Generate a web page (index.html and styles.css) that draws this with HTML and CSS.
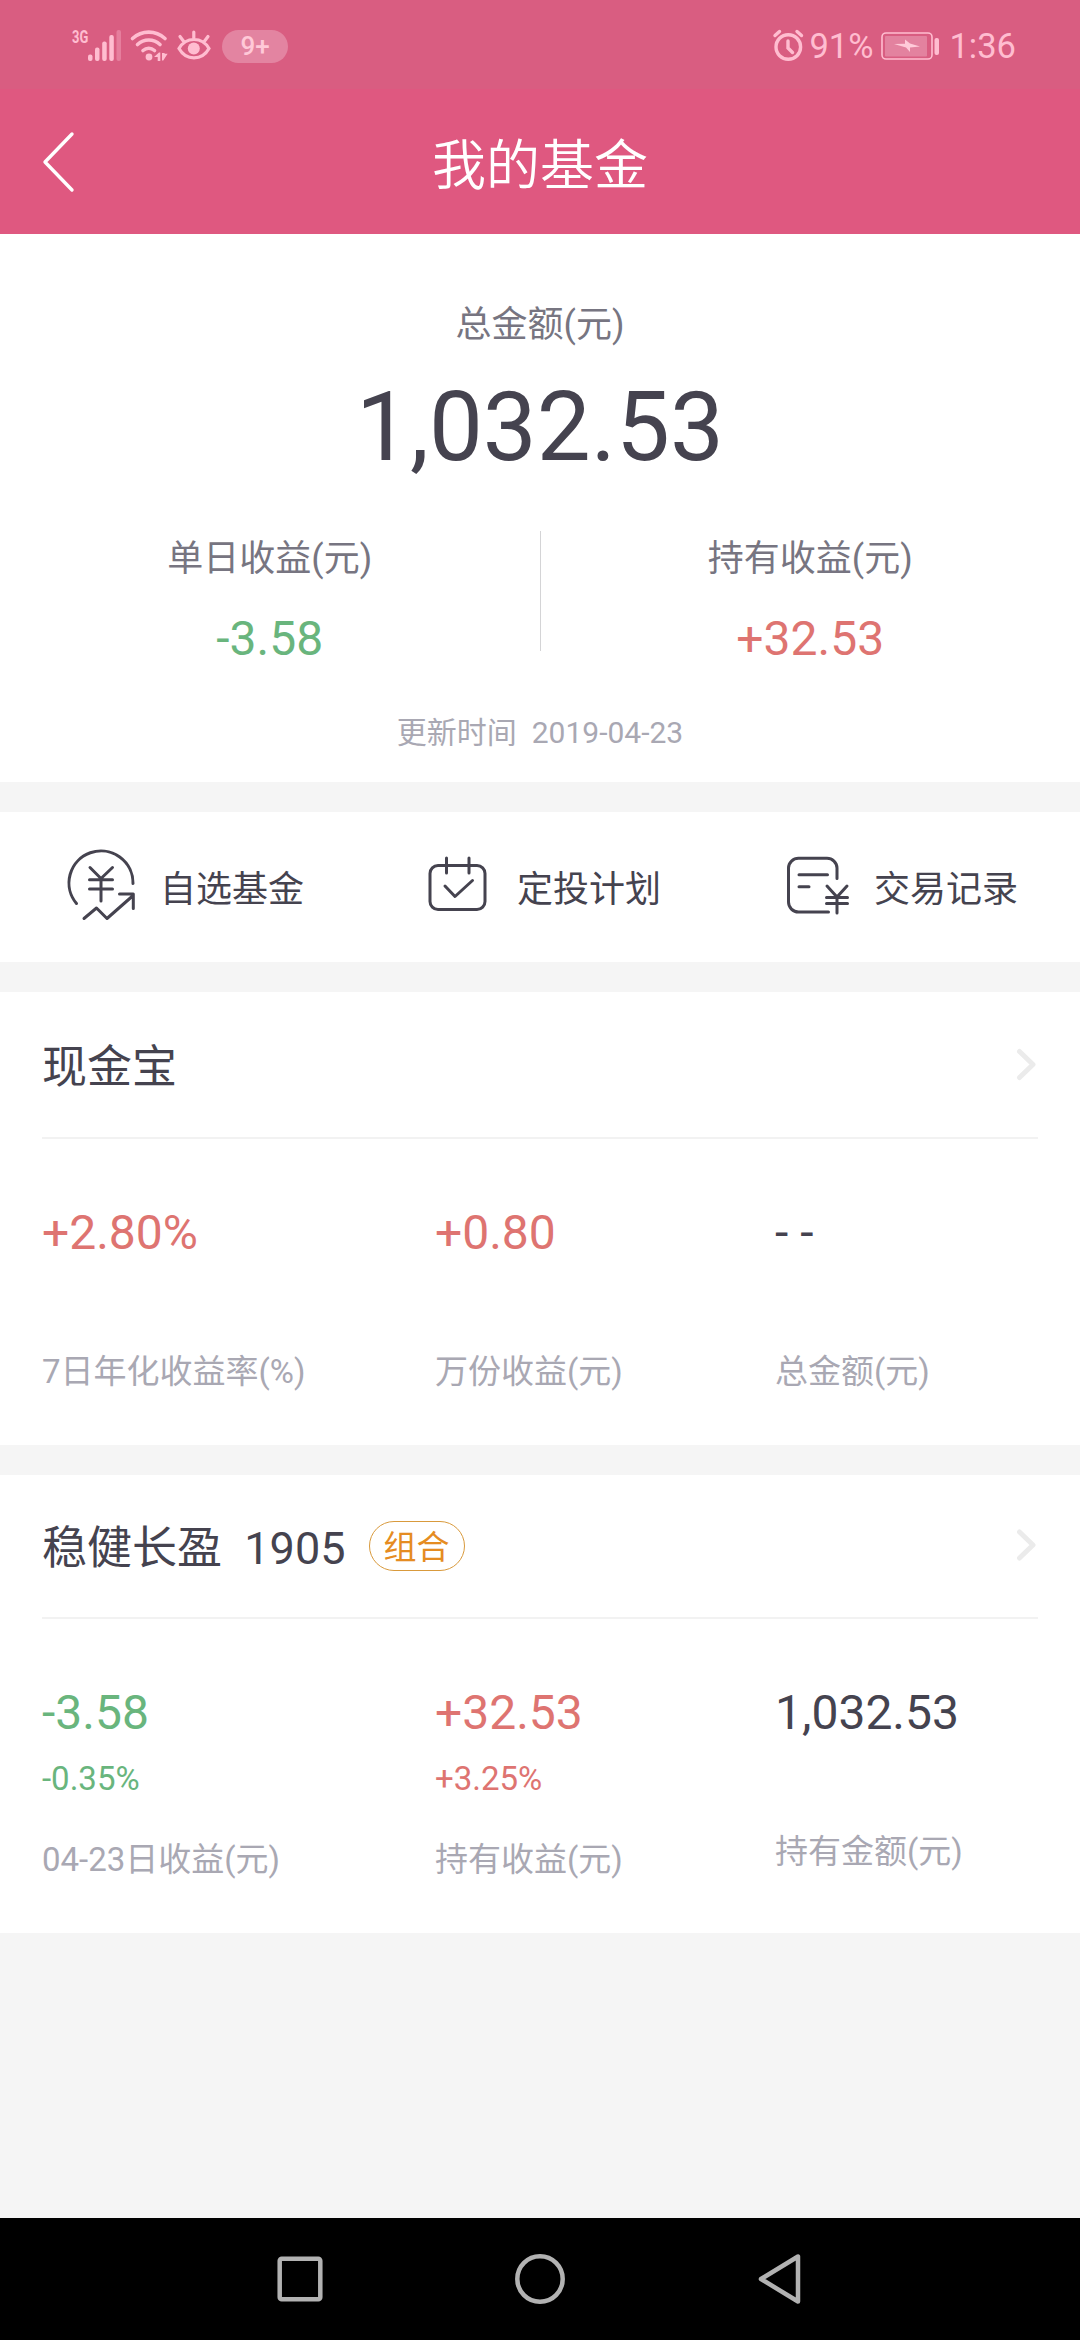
FILE: index.html
```html
<!DOCTYPE html>
<html lang="zh-CN">
<head>
<meta charset="utf-8">
<title>我的基金</title>
<link rel="stylesheet" href="styles.css">
</head>
<body>
<header class="topbar">
  <div class="status">
    <div class="status-left">
      <span class="net">3G</span>
      <svg class="ic-signal" width="34" height="34" viewBox="0 0 34 34" fill="#ffbdd0">
        <rect x="0" y="25.500" width="4.500" height="6.500" rx="2"/>
        <rect x="7" y="18.500" width="4.500" height="13.500" rx="2"/>
        <rect x="14.200" y="12.500" width="4.500" height="19.500" rx="2"/>
        <rect x="21.300" y="6" width="4.500" height="26" rx="2"/>
        <rect x="28.500" y="1" width="4.500" height="31" rx="2" opacity=".35"/>
      </svg>
      <svg class="ic-wifi" width="38" height="34" viewBox="0 0 38 34" fill="none" stroke="#ffbdd0" stroke-width="3.600" stroke-linecap="round">
        <path d="M2.500 9.500C12 1 25.500 1 35 9.500M7.500 15.500c6.500-6 16-6 22.500 0M13 21.500c3.500-3 8-3 11.500 0"/>
        <circle cx="19" cy="28" r="3.400" fill="#ffbdd0" stroke="none"/>
        <path d="M24 28 29 23.500h1.300V32h-2.600v-4zM32 24h2.600v.8h3L33.300 31.500H32z" fill="#ffbdd0" stroke="none"/>
      </svg>
      <svg class="ic-eye" width="34" height="34" viewBox="0 0 34 34" fill="none" stroke="#ffbdd0" stroke-width="3.200" stroke-linecap="round">
        <path d="M2 19.500C9 7.500 25 7.500 32 19.500 25 32 9 32 2 19.500zM16.800 3v6M3 7.500l4.500 6M31 7.500l-4.500 6"/>
        <circle cx="16.800" cy="19.500" r="6" fill="#ffbdd0" stroke="none"/>
      </svg>
      <span class="pill">9+</span>
    </div>
    <div class="status-right">
      <svg class="ic-alarm" width="32" height="34" viewBox="0 0 32 34" fill="none" stroke="#ffbdd0" stroke-width="3.400" stroke-linecap="round">
        <circle cx="15.300" cy="18" r="12.300"/>
        <path d="M2 6.500 6.500 2.500M28.500 6.500 24 2.500M15 12v7l4.500 4.500"/>
      </svg>
      <span class="pct">91%</span>
      <svg class="ic-battery" width="59" height="30" viewBox="0 0 59 30">
        <rect x="1" y="2" width="50" height="26" rx="4" fill="none" stroke="#ffbdd0" stroke-width="1.600"/>
        <rect x="4" y="5" width="42" height="20.500" rx="1" fill="#e3829f"/>
        <path d="M13 13 24 12.800V8.500l5 4 10 3-10 1V21l-4-4.500z" fill="#ffcbd9"/>
        <rect x="53.500" y="7" width="4.500" height="17" rx="2" fill="#ffbdd0"/>
      </svg>
      <span class="time">1:36</span>
    </div>
  </div>
  <nav class="titlebar">
    <svg class="back" width="36" height="64" viewBox="0 0 36 64" fill="none" stroke="#fff" stroke-width="3.400" stroke-linecap="round" stroke-linejoin="round"><path d="M31 4 4 32 31 60"/></svg>
    <h1>我的基金</h1>
  </nav>
</header>

<main>
  <section class="summary">
    <div class="label">总金额(元)</div>
    <div class="total">1,032.53</div>
    <div class="stats">
      <div class="stat"><div class="label">单日收益(元)</div><div class="value down">-3.58</div></div>
      <div class="rule"></div>
      <div class="stat"><div class="label">持有收益(元)</div><div class="value up">+32.53</div></div>
    </div>
    <div class="updated">更新时间&nbsp; 2019-04-23</div>
  </section>

  <section class="actions">
    <a class="action">
      <svg width="72" height="72" viewBox="0 0 72 72"><path d="M10.500 52.500A32 32 0 1 1 67 32.500M24 16.500 35 27.500 46.500 16.500M35 27.500V50M23.500 28.700H46.500M23.500 38H46.500M18 67.500 30.500 57 41 67.500 66 45.500M53.500 43H67.300V57.500"/></svg>
      <span>自选基金</span>
    </a>
    <a class="action">
      <svg width="72" height="72" viewBox="-1 0 72 72"><rect x="6" y="14.500" width="55" height="44" rx="8"/><path d="M22.500 7V22M45 7V22M21 35 31 45.500 48.500 29.500"/></svg>
      <span>定投计划</span>
    </a>
    <a class="action">
      <svg width="72" height="72" viewBox="0 0 72 72"><path d="M57 27.500V17A10 10 0 0 0 47 7.300H18.500A10 10 0 0 0 8.500 17V51A10 10 0 0 0 18.500 61H48.500M19 23.700H47.500M19 35.700H29M47 35 57 46 67 35M57 46V62M46.500 46.500H67.500M46.500 52.500H67.500"/></svg>
      <span>交易记录</span>
    </a>
  </section>

  <section class="fund fund-cash">
    <div class="fund-head">
      <h2>现金宝</h2>
      <svg class="chevron" width="22" height="34" viewBox="0 0 22 34"><path d="M3.500 3.500 17 16.500 3.500 29.500"/></svg>
    </div>
    <div class="cols">
      <div class="col"><div class="value up">+2.80%</div><div class="caption">7日年化收益率(%)</div></div>
      <div class="col"><div class="value up">+0.80</div><div class="caption">万份收益(元)</div></div>
      <div class="col"><div class="value">- -</div><div class="caption">总金额(元)</div></div>
    </div>
  </section>

  <section class="fund fund-group">
    <div class="fund-head">
      <h2>稳健长盈&nbsp; 1905</h2><span class="tag">组合</span>
      <svg class="chevron" width="22" height="34" viewBox="0 0 22 34"><path d="M3.500 3 17 16 3.500 29"/></svg>
    </div>
    <div class="cols">
      <div class="col"><div class="value down">-3.58</div><div class="rate down">-0.35%</div><div class="caption">04-23日收益(元)</div></div>
      <div class="col"><div class="value up">+32.53</div><div class="rate up">+3.25%</div><div class="caption">持有收益(元)</div></div>
      <div class="col"><div class="value">1,032.53</div><div class="caption">持有金额(元)</div></div>
    </div>
  </section>
</main>

<footer class="navkeys">
  <svg width="54" height="54" viewBox="0 0 54 54"><rect x="6.700" y="6.700" width="40.600" height="40.600" rx="2"/></svg>
  <svg width="54" height="54" viewBox="0 0 54 54"><circle cx="27" cy="27" r="22.700"/></svg>
  <svg width="54" height="54" viewBox="0 0 54 54"><path d="M45 4.500V49.500L8 27Z"/></svg>
</footer>
</body>
</html>
```
FILE: styles.css
```css
* { box-sizing: border-box; }
body {
  margin: 0;
  width: 1080px;
  height: 2340px;
  display: flex;
  flex-direction: column;
  background: #f5f5f5;
  color: #45434f;
  font-family: Roboto, "Noto Sans CJK SC", sans-serif;
}
h1, h2 { margin: 0; font-weight: 400; }
svg { display: block; flex: none; overflow: visible; }

.topbar { height: 234px; background: #df5880; color: #fff; }
.status {
  height: 89px;
  padding: 0 64px 0 72px;
  display: flex;
  justify-content: space-between;
  background: #d95d81;
  color: #ffbdd0;
}
.status-left, .status-right { display: flex; align-items: center; height: 92px; }
.status-right { font-size: 34.500px; line-height: 40px; }
.net {
  width: 16px;
  height: 34px;
  font-size: 18px;
  font-weight: 700;
  line-height: 16px;
  transform: scaleX(.72);
  transform-origin: left;
}
.ic-wifi { margin-left: 8px; }
.ic-eye { margin-left: 9px; }
.pill {
  margin-left: 11px;
  width: 66px;
  height: 33px;
  border-radius: 17px;
  background: #e384a1;
  color: #ffc9d8;
  font-size: 26px;
  font-weight: 500;
  line-height: 33px;
  text-align: center;
}
.pct { margin-left: 4px; width: 64px; }
.ic-battery { margin-left: 8px; }
.time { margin-left: 9px; }
.titlebar {
  height: 145px;
  padding: 0 41px;
  display: grid;
  grid-template-columns: 36px 1fr 36px;
  align-items: center;
}
.titlebar h1 { font-size: 54px; line-height: 64px; padding-top: 10px; text-align: center; font-weight: 350; }

.summary { height: 548px; padding-top: 67px; background: #fff; text-align: center; }
.label { font-size: 36px; line-height: 48px; color: #777581; }
.total { margin-top: 22px; font-size: 96px; line-height: 112px; }
.stats { margin-top: 48px; height: 136px; display: flex; }
.stat { flex: 1; }
.stat .label { line-height: 57px; margin-bottom: 23px; }
.rule { width: 1px; height: 120px; background: #d4d4d6; }
.value { font-size: 48px; line-height: 56px; }
.up { color: #de7471; }
.down { color: #69b57d; }
.updated { margin-top: 46px; font-size: 30px; line-height: 40px; color: #a9a8b3; }

.actions {
  margin: 30px 0;
  height: 150px;
  padding: 0 62px 0 66px;
  display: flex;
  justify-content: space-between;
  align-items: center;
  background: #fff;
}
.action { display: flex; align-items: center; gap: 22px; font-size: 36px; line-height: 48px; }
.action span { padding-top: 6px; }
.action svg { fill: none; stroke: #45434f; stroke-width: 3; stroke-linecap: round; stroke-linejoin: round; }

.fund { padding: 0 42px; background: #fff; }
.fund-cash { height: 453px; }
.fund-group { margin-top: 30px; height: 458px; }
.fund-head { display: flex; align-items: center; height: 147px; border-bottom: 2px solid #f2f2f2; }
.fund-group .fund-head { height: 144px; }
.fund-head h2 { padding-top: 7px; font-size: 45px; line-height: 56px; }
.fund-group h2 { padding-top: 5px; }
.chevron { margin-left: auto; fill: none; stroke: #ebebeb; stroke-width: 5; stroke-linecap: round; stroke-linejoin: round; }
.tag {
  margin-left: 23px;
  width: 96px;
  height: 50px;
  border: 1px solid #d99a3c;
  border-radius: 25px;
  color: #e58c22;
  font-size: 33px;
  line-height: 51px;
  text-align: center;
}
.cols { padding-top: 66px; display: grid; grid-template-columns: 393px 340px 1fr; }
.rate { margin-top: 16px; font-size: 33px; line-height: 44px; }
.caption { margin-top: 89px; font-size: 33px; line-height: 44px; color: #a9a8b3; }
.rate + .caption { margin-top: 37px; }

.navkeys {
  margin-top: auto;
  height: 122px;
  padding: 0 273px;
  display: flex;
  align-items: center;
  justify-content: space-between;
  background: #000;
}
.navkeys svg { fill: none; stroke: #b2b2b2; stroke-width: 4.500; stroke-linejoin: round; }
```
